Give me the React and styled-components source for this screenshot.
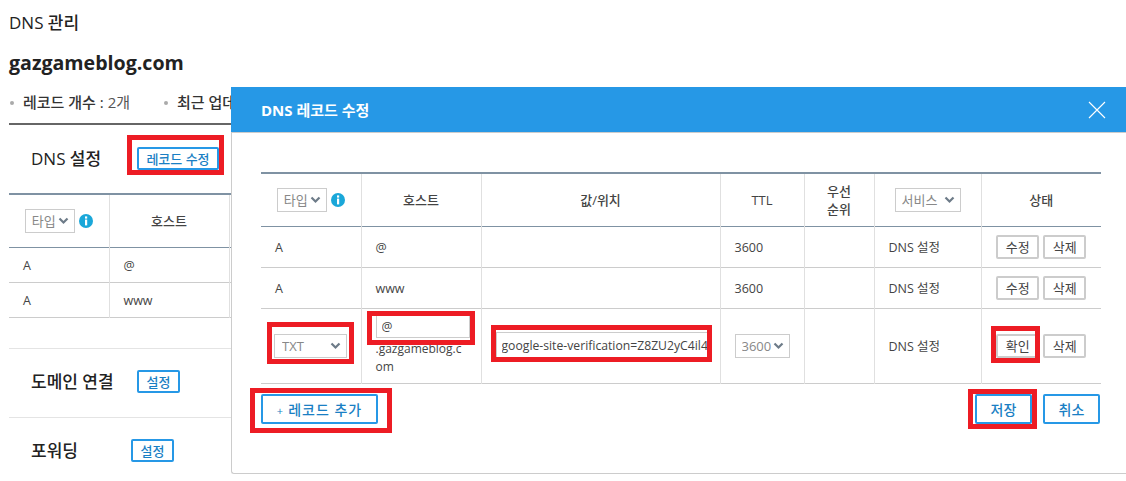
import React from 'react'
import styled, { createGlobalStyle } from 'styled-components'

const GlobalStyle = createGlobalStyle`
    html, body {
        margin: 0;
        height: 481px;
        overflow: hidden;
        background: #fff;
        color: #333;
        font-family: "Open Sans", "Noto Sans CJK KR", sans-serif;
        font-size: 12px;
    }
    * { box-sizing: border-box; }
`

const Page = styled.div`
    position: relative;
    width: 1126px;
    height: 481px;
    overflow: hidden;
    padding-left: 9px;
`

const PageTitle = styled.h1`
    margin: 0;
    height: 46px;
    font-size: 17px;
    line-height: 46px;
    font-weight: 500;
    color: #222;
`

const DomainName = styled.h2`
    margin: 0;
    height: 34px;
    font-size: 19.6px;
    line-height: 34px;
    font-weight: 700;
    color: #222;
`

const Stats = styled.ul`
    display: flex;
    margin: 0;
    padding: 0;
    height: 45px;
    list-style: none;
    align-items: center;
    border-bottom: 2px solid #666;
`

const Stat = styled.li`
    position: relative;
    width: ${p => p.$width}px;
    overflow: hidden;
    padding-left: 14px;
    font-size: 15px;
    white-space: nowrap;
    color: #555;

    b { font-weight: 500; color: #333; }

    &::before {
        content: '';
        position: absolute;
        left: 1px;
        top: 10px;
        width: 4px;
        height: 4px;
        border-radius: 50%;
        background: #aaa;
    }
`

const SectionHead = styled.div`
    display: flex;
    align-items: center;
    height: ${p => p.$height}px;
    margin-top: ${p => p.$gap || 0}px;
    padding: 0 0 2px 22px;
    border-top: ${p => (p.$line ? '1px solid #e4e4e4' : 'none')};
`

const SectionTitle = styled.h3`
    margin: -2px 0 0;
    width: ${p => p.$width}px;
    font-size: 17px;
    font-weight: 500;
    color: #222;
    white-space: nowrap;
`

const BlueButton = styled.button`
    height: ${p => p.$height || 23}px;
    width: ${p => p.$width}px;
    padding: 0;
    background: #fff;
    border: 2px solid #2698e6;
    border-radius: 2px;
    color: #1a7fc4;
    font-family: inherit;
    font-size: ${p => p.$size || 13}px;
    font-weight: 500;
    letter-spacing: ${p => p.$spacing || 0}px;
`

const GrayButton = styled.button`
    width: 43px;
    height: 24px;
    padding: 0;
    background: #fff;
    border: 2px solid #ccc;
    border-radius: 2px;
    color: #444;
    font-family: inherit;
    font-size: 13px;
`

const Table = styled.table`
    table-layout: fixed;
    border-collapse: collapse;
    width: ${p => p.$width}px;
    border-top: 2px solid #7f92a3;
    color: #444;
`

const Col = styled.col`
    width: ${p => p.$width}px;
`

const HeadRow = styled.tr`
    height: ${p => p.$height}px;
    border-bottom: 1px solid #7f92a3;
`

const Row = styled.tr`
    height: ${p => p.$height}px;
    border-bottom: 1px solid #ccc;
`

const Th = styled.th`
    padding: 0;
    border-left: 1px solid #e0e0e0;
    font-size: 13px;
    font-weight: 500;
    line-height: 18px;
    text-align: center;
    color: #444;

    &:first-child { border-left: 0; }
`

const Td = styled.td`
    padding: ${p => p.$pad || '2px 14px 0'};
    border-left: 1px solid #e0e0e0;
    font-size: 12.5px;
    line-height: 18px;
    vertical-align: middle;

    &:first-child { border-left: 0; }
`

const FilterCell = styled.div`
    display: flex;
    align-items: center;
    justify-content: center;
    gap: 4px;
`

const SelectWrap = styled.span`
    position: relative;
    display: ${p => (p.$center ? 'flex' : 'inline-block')};
    width: ${p => p.$width}px;
    height: 24px;
    margin: ${p => (p.$center ? '0 auto' : '0')};

    svg {
        position: absolute;
        right: 6px;
        top: 8px;
        pointer-events: none;
    }
`

const Select = styled.select`
    appearance: none;
    width: 100%;
    height: 100%;
    padding: 0 0 0 ${p => p.$pad || 6}px;
    background: #fff;
    border: 1px solid #ccc;
    border-radius: 0;
    color: #888;
    font-family: inherit;
    font-size: 13px;
`

const TextInput = styled.input`
    display: block;
    width: ${p => p.$width}px;
    height: ${p => p.$height}px;
    padding: 0 0 0 5px;
    border: 1px solid #ccc;
    border-radius: 0;
    color: #444;
    font-family: inherit;
    font-size: 12.2px;
    background: #fff;
`

const HostSuffix = styled.div`
    margin-top: 2px;
    font-size: 12px;
    word-break: break-all;
`

const ActionCell = styled.div`
    display: flex;
    justify-content: center;
    gap: 4px;
`

const Modal = styled.section`
    position: absolute;
    left: 231px;
    top: 87px;
    right: 0;
    height: 387px;
    background: #fff;
    border: 1px solid #ccc;
    border-top: 0;
    border-right: 0;
    border-bottom-left-radius: 3px;
`

const ModalHead = styled.header`
    display: flex;
    align-items: center;
    justify-content: space-between;
    height: 46px;
    margin-left: -1px;
    padding: 0 20px 0 30px;
    background: #2698e6;
    border-bottom: 1px solid #ccc;
    color: #fff;
    font-size: 15px;
    font-weight: 700;
`

const CloseButton = styled.button`
    display: flex;
    padding: 0;
    background: none;
    border: 0;
`

const ModalBody = styled.div`
    padding: 39px 0 0 29px;
`

const ModalFoot = styled.div`
    display: flex;
    justify-content: space-between;
    width: 840px;
    margin-top: 10px;
`

const FootRight = styled.div`
    display: flex;
    gap: 11px;
    padding-right: 1px;
`

const PlusSign = styled.span`
    font-size: 11px;
    margin-right: 4px;
`

const Highlight = styled.div`
    position: absolute;
    left: ${p => p.$x}px;
    top: ${p => p.$y}px;
    width: ${p => p.$w}px;
    height: ${p => p.$h}px;
    border: 5px solid #ed1c24;
    pointer-events: none;
`

const Chevron = () => (
    <svg width="11" height="8" viewBox="0 0 11 8" fill="none">
        <path d="M1.5 1.5 5.5 5.5 9.5 1.5" stroke="#6d7b88" strokeWidth="2.2" />
    </svg>
)

const InfoIcon = () => (
    <svg width="14" height="14" viewBox="0 0 14 14">
        <circle cx="7" cy="7" r="7" fill="#1aa7d9" />
        <rect x="6" y="2.4" width="2.2" height="2.2" fill="#fff" />
        <rect x="6" y="5.6" width="2.2" height="5.8" fill="#fff" />
    </svg>
)

const CloseIcon = () => (
    <svg width="18" height="18" viewBox="0 0 18 18" fill="none">
        <path d="M1 1 17 17M17 1 1 17" stroke="#fff" strokeWidth="1.1" />
    </svg>
)

const Dropdown = ({ width, label, pad, center }) => (
    <SelectWrap $width={width} $center={center}>
        <Select $pad={pad} defaultValue={label}>
            <option>{label}</option>
        </Select>
        <Chevron />
    </SelectWrap>
)

const TypeFilter = () => (
    <FilterCell>
        <Dropdown width={50} label="타입" />
        <InfoIcon />
    </FilterCell>
)

const records = [
    { type: 'A', host: '@' },
    { type: 'A', host: 'www' },
]

const highlights = [
    { x: 127, y: 135, w: 97, h: 40 },
    { x: 267, y: 322, w: 87, h: 42 },
    { x: 367, y: 311, w: 108, h: 34 },
    { x: 491, y: 325, w: 221, h: 37 },
    { x: 250, y: 388, w: 142, h: 45 },
    { x: 991, y: 326, w: 49, h: 37 },
    { x: 968, y: 389, w: 69, h: 40 },
]

const App = () => {
    return (
        <Page>
            <GlobalStyle />
            <PageTitle>DNS 관리</PageTitle>
            <DomainName>gazgameblog.com</DomainName>
            <Stats>
                <Stat $width={154}><b>레코드 개수 :</b> 2개</Stat>
                <Stat $width={68}><b>최근 업데이트</b></Stat>
            </Stats>

            <SectionHead $height={68}>
                <SectionTitle $width={106}>DNS 설정</SectionTitle>
                <BlueButton $width={82}>레코드 수정</BlueButton>
            </SectionHead>
            <Table $width={1117}>
                <colgroup>
                    <Col $width={100} />
                    <Col $width={120} />
                    <Col />
                </colgroup>
                <thead>
                    <HeadRow $height={53}>
                        <Th><TypeFilter /></Th>
                        <Th>호스트</Th>
                        <Th>값/위치</Th>
                    </HeadRow>
                </thead>
                <tbody>
                    {records.map((r, i) => (
                        <Row key={i} $height={35}>
                            <Td>{r.type}</Td>
                            <Td>{r.host}</Td>
                            <Td />
                        </Row>
                    ))}
                </tbody>
            </Table>

            <SectionHead $height={69} $gap={30} $line>
                <SectionTitle $width={106}>도메인 연결</SectionTitle>
                <BlueButton $width={43}>설정</BlueButton>
            </SectionHead>
            <SectionHead $height={69} $line>
                <SectionTitle $width={100}>포워딩</SectionTitle>
                <BlueButton $width={43}>설정</BlueButton>
            </SectionHead>

            <Modal>
                <ModalHead>
                    DNS 레코드 수정
                    <CloseButton><CloseIcon /></CloseButton>
                </ModalHead>
                <ModalBody>
                    <Table $width={840}>
                        <colgroup>
                            <Col $width={100} />
                            <Col $width={120} />
                            <Col $width={239} />
                            <Col $width={84} />
                            <Col $width={70} />
                            <Col $width={107} />
                            <Col />
                        </colgroup>
                        <thead>
                            <HeadRow $height={53}>
                                <Th><TypeFilter /></Th>
                                <Th>호스트</Th>
                                <Th>값/위치</Th>
                                <Th>TTL</Th>
                                <Th>우선<br />순위</Th>
                                <Th><Dropdown width={66} label="서비스" center /></Th>
                                <Th>상태</Th>
                            </HeadRow>
                        </thead>
                        <tbody>
                            {records.map((r, i) => (
                                <Row key={i} $height={41}>
                                    <Td>{r.type}</Td>
                                    <Td>{r.host}</Td>
                                    <Td />
                                    <Td>3600</Td>
                                    <Td />
                                    <Td>DNS 설정</Td>
                                    <Td $pad="0">
                                        <ActionCell>
                                            <GrayButton>수정</GrayButton>
                                            <GrayButton>삭제</GrayButton>
                                        </ActionCell>
                                    </Td>
                                </Row>
                            ))}
                            <Row $height={75}>
                                <Td $pad="0 0 0 13px"><Dropdown width={73} label="TXT" pad={7} /></Td>
                                <Td $pad="0 12px 0 14px">
                                    <TextInput $width={94} $height={23} defaultValue="@" />
                                    <HostSuffix>.gazgameblog.com</HostSuffix>
                                </Td>
                                <Td $pad="0 0 0 14px">
                                    <TextInput $width={212} $height={27} defaultValue="google-site-verification=Z8ZU2yC4il4c" />
                                </Td>
                                <Td $pad="0 0 0 14px"><Dropdown width={55} label="3600" pad={6} /></Td>
                                <Td />
                                <Td>DNS 설정</Td>
                                <Td $pad="0">
                                    <ActionCell>
                                        <GrayButton>확인</GrayButton>
                                        <GrayButton>삭제</GrayButton>
                                    </ActionCell>
                                </Td>
                            </Row>
                        </tbody>
                    </Table>
                    <ModalFoot>
                        <BlueButton $width={117} $height={30} $size={14} $spacing={1}><PlusSign>+</PlusSign>레코드 추가</BlueButton>
                        <FootRight>
                            <BlueButton $width={57} $height={30} $size={14}>저장</BlueButton>
                            <BlueButton $width={57} $height={30} $size={14}>취소</BlueButton>
                        </FootRight>
                    </ModalFoot>
                </ModalBody>
            </Modal>

            {highlights.map((h, i) => (
                <Highlight key={i} $x={h.x} $y={h.y} $w={h.w} $h={h.h} />
            ))}
        </Page>
    )
}

export default App
